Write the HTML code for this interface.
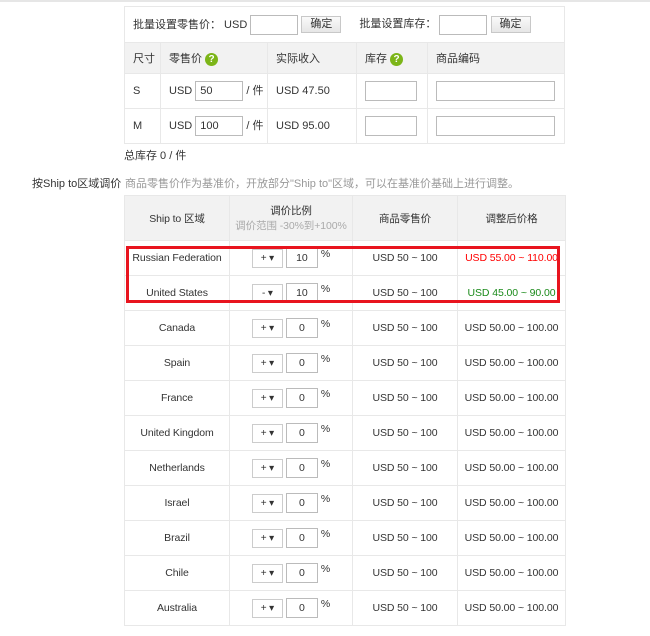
<!DOCTYPE html><html><head><meta charset="utf-8"><style>
*{margin:0;padding:0;box-sizing:border-box}
body{width:650px;height:636px;background:#fff;font-family:"Liberation Sans","Noto Sans CJK SC",sans-serif;font-size:11px;color:#333;position:relative;overflow:hidden}
.a{position:absolute}
.topline{left:0;top:0;width:650px;height:2px;background:#e6e6e6}
table{border-collapse:collapse;position:absolute;table-layout:fixed}
td{border:1px solid #e8e8e8;padding:0 0 0 8px;vertical-align:middle}
.inp{display:inline-block;border:1px solid #bbb;background:#fff;vertical-align:middle;height:20px;line-height:18px;padding-left:4px}
.btn{display:inline-block;border:1px solid #c8c8c8;background:linear-gradient(#fafafa,#e6e6e6);height:17px;line-height:15px;padding:0 8px;font-size:11px;vertical-align:middle}
.q{display:inline-block;width:13px;height:13px;border-radius:50%;background:#7cb518;color:#fff;font-weight:bold;font-size:10px;line-height:13px;text-align:center;vertical-align:middle}
.hd td{background:#f2f2f2}
.t2 td{text-align:center;padding:0;font-size:10.5px;letter-spacing:-0.1px}
.sel{display:inline-block;width:31px;height:19px;border:1px solid #ccc;font-size:10px;line-height:17px;text-align:center;vertical-align:middle}
.num{display:inline-block;width:32px;height:20px;border:1px solid #bbb;line-height:18px;text-align:center;vertical-align:middle;margin-left:3px}
.pct{vertical-align:middle;margin-left:3px;position:relative;top:-4px}
</style></head><body>
<div class="a topline"></div>
<table style="left:124px;top:6px;width:440px">
<colgroup><col style="width:36px"><col style="width:107px"><col style="width:89px"><col style="width:71px"><col style="width:137px"></colgroup>
<tr style="height:36px"><td colspan="5">批量设置零售价：&nbsp;USD <span class="inp" style="width:48px"></span> <span class="btn">确定</span><span style="margin-left:18px">批量设置库存：</span> <span class="inp" style="width:48px"></span> <span class="btn">确定</span></td></tr>
<tr class="hd" style="height:31px"><td>尺寸</td><td>零售价 <span class="q">?</span></td><td>实际收入</td><td>库存 <span class="q">?</span></td><td>商品编码</td></tr>
<tr style="height:35px"><td>S</td><td>USD <span class="inp" style="width:48px">50</span> / 件</td><td>USD 47.50</td><td><span class="inp" style="width:52px"></span></td><td><span class="inp" style="width:119px"></span></td></tr>
<tr style="height:35px"><td>M</td><td>USD <span class="inp" style="width:48px">100</span> / 件</td><td>USD 95.00</td><td><span class="inp" style="width:52px"></span></td><td><span class="inp" style="width:119px"></span></td></tr>
</table>
<div class="a" style="left:124px;top:147px">总库存 0 / 件</div>
<div class="a" style="left:32px;top:175px">按Ship to区域调价</div>
<div class="a" style="left:125px;top:175px;color:#999">商品零售价作为基准价，开放部分"Ship to"区域，可以在基准价基础上进行调整。</div>
<table class="t2" style="left:124px;top:195px;width:441px">
<colgroup><col style="width:105px"><col style="width:123px"><col style="width:105px"><col style="width:108px"></colgroup>
<tr class="hd" style="height:45px"><td>Ship to 区域</td><td>调价比例<br><span style="color:#aaa">调价范围 -30%到+100%</span></td><td>商品零售价</td><td>调整后价格</td></tr>
<tr style="height:35px"><td>Russian Federation</td><td><span class="sel">+ ▾</span><span class="num">10</span><span class="pct">%</span></td><td>USD 50 ~ 100</td><td style="color:#f00">USD 55.00 ~ 110.00</td></tr>
<tr style="height:35px"><td>United States</td><td><span class="sel">- ▾</span><span class="num">10</span><span class="pct">%</span></td><td>USD 50 ~ 100</td><td style="color:#1a8a1a">USD 45.00 ~ 90.00</td></tr>
<tr style="height:35px"><td>Canada</td><td><span class="sel">+ ▾</span><span class="num">0</span><span class="pct">%</span></td><td>USD 50 ~ 100</td><td>USD 50.00 ~ 100.00</td></tr>
<tr style="height:35px"><td>Spain</td><td><span class="sel">+ ▾</span><span class="num">0</span><span class="pct">%</span></td><td>USD 50 ~ 100</td><td>USD 50.00 ~ 100.00</td></tr>
<tr style="height:35px"><td>France</td><td><span class="sel">+ ▾</span><span class="num">0</span><span class="pct">%</span></td><td>USD 50 ~ 100</td><td>USD 50.00 ~ 100.00</td></tr>
<tr style="height:35px"><td>United Kingdom</td><td><span class="sel">+ ▾</span><span class="num">0</span><span class="pct">%</span></td><td>USD 50 ~ 100</td><td>USD 50.00 ~ 100.00</td></tr>
<tr style="height:35px"><td>Netherlands</td><td><span class="sel">+ ▾</span><span class="num">0</span><span class="pct">%</span></td><td>USD 50 ~ 100</td><td>USD 50.00 ~ 100.00</td></tr>
<tr style="height:35px"><td>Israel</td><td><span class="sel">+ ▾</span><span class="num">0</span><span class="pct">%</span></td><td>USD 50 ~ 100</td><td>USD 50.00 ~ 100.00</td></tr>
<tr style="height:35px"><td>Brazil</td><td><span class="sel">+ ▾</span><span class="num">0</span><span class="pct">%</span></td><td>USD 50 ~ 100</td><td>USD 50.00 ~ 100.00</td></tr>
<tr style="height:35px"><td>Chile</td><td><span class="sel">+ ▾</span><span class="num">0</span><span class="pct">%</span></td><td>USD 50 ~ 100</td><td>USD 50.00 ~ 100.00</td></tr>
<tr style="height:35px"><td>Australia</td><td><span class="sel">+ ▾</span><span class="num">0</span><span class="pct">%</span></td><td>USD 50 ~ 100</td><td>USD 50.00 ~ 100.00</td></tr>
</table>
<div class="a" style="left:126px;top:246px;width:434px;height:57px;border:3px solid #e8141e"></div>
</body></html>
